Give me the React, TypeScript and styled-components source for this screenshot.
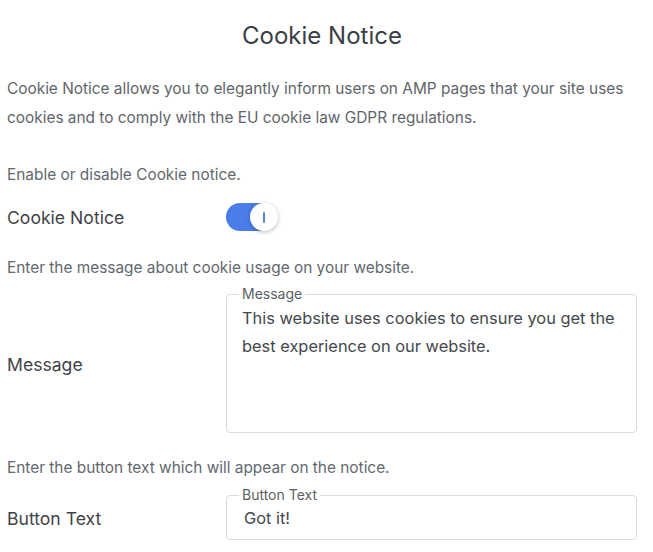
import React, { useState } from 'react';
import styled, { createGlobalStyle } from 'styled-components';

const GlobalStyle = createGlobalStyle`
  body {
    margin: 0;
    background: #fff;
    font-family: Inter, 'Noto Sans', sans-serif;
  }
`;

const Page = styled.div`
  width: 653px;
  padding: 0 16px 0 7px;
  box-sizing: border-box;
`;

const Title = styled.h1`
  margin: 0;
  padding-top: 20px;
  text-align: center;
  font-size: 24px;
  font-weight: 400;
  color: #3b4045;
  line-height: 32px;
`;

const Intro = styled.p`
  margin: 22px 0 0;
  font-size: 15.4px;
  line-height: 29px;
  color: #5f656b;
`;

const Hint = styled.p<{ $top?: number }>`
  margin: ${p => p.$top ?? 26}px 0 0;
  font-size: 15.4px;
  line-height: 20px;
  color: #62686e;
`;

const Row = styled.div<{ $top?: number }>`
  display: flex;
  align-items: center;
  margin-top: ${p => p.$top ?? 8}px;
`;

// fieldset rows carry the legend above the border, so the label drops a bit to sit on the box centre
const Label = styled.div<{ $drop?: number }>`
  width: 219px;
  flex-shrink: 0;
  padding-top: ${p => p.$drop ?? 0}px;
  font-size: 17.6px;
  color: #3f4347;
`;

const Track = styled.button<{ $on: boolean }>`
  position: relative;
  width: 52px;
  height: 28px;
  padding: 0;
  border: none;
  border-radius: 14px;
  background: ${p => (p.$on ? 'linear-gradient(90deg, #4b7de9 0 70%, transparent 70%)' : '#c9ccd0')};
  cursor: pointer;
`;

const Knob = styled.span<{ $on: boolean }>`
  position: absolute;
  top: 0;
  left: ${p => (p.$on ? 24 : 0)}px;
  width: 28px;
  height: 28px;
  border-radius: 50%;
  background: #fff;
  box-shadow: 0 1px 4px rgba(0, 0, 0, 0.28);
  display: flex;
  align-items: center;
  justify-content: center;
  &::after {
    content: '';
    width: 2px;
    height: 11px;
    background: #5a82d8;
    border-radius: 1px;
  }
`;

const Field = styled.fieldset`
  flex: 1;
  margin: 0;
  padding: 0 15px 0 15px;
  border: 1px solid #d9dcdf;
  border-radius: 4px;
  min-width: 0;
`;

const Legend = styled.legend`
  padding: 0 3px;
  margin-left: -3px;
  font-size: 14px;
  line-height: 16px;
  color: #5a5f64;
`;

const Area = styled.textarea`
  display: block;
  width: 100%;
  height: 128px;
  margin: 0;
  padding: 2px 0 0;
  border: none;
  outline: none;
  resize: none;
  font-family: Inter, 'Noto Sans', sans-serif;
  font-size: 16.4px;
  line-height: 28px;
  color: #44484c;
  background: transparent;
`;

const Input = styled.input`
  display: block;
  width: 100%;
  height: 30px;
  margin: 0;
  padding: 0 0 6px 2px;
  border: none;
  outline: none;
  font-family: Inter, 'Noto Sans', sans-serif;
  font-size: 16.4px;
  color: #44484c;
  background: transparent;
`;

export default function App() {
  const [on, setOn] = useState(true);
  const [message, setMessage] = useState(
    'This website uses cookies to ensure you get the best experience on our website.'
  );
  const [buttonText, setButtonText] = useState('Got it!');

  return (
    <Page>
      <GlobalStyle />
      <Title>Cookie Notice</Title>
      <Intro>
        Cookie Notice allows you to elegantly inform users on AMP pages that your site uses
        cookies and to comply with the EU cookie law GDPR regulations.
      </Intro>

      <Hint $top={33}>Enable or disable Cookie notice.</Hint>
      <Row $top={18}>
        <Label>Cookie Notice</Label>
        <Track $on={on} onClick={() => setOn(!on)} aria-pressed={on}>
          <Knob $on={on} />
        </Track>
      </Row>

      <Hint $top={27}>Enter the message about cookie usage on your website.</Hint>
      <Row $top={8}>
        <Label $drop={10}>Message</Label>
        <Field>
          <Legend>Message</Legend>
          <Area value={message} onChange={e => setMessage(e.target.value)} />
        </Field>
      </Row>

      <Hint $top={25}>Enter the button text which will appear on the notice.</Hint>
      <Row $top={9}>
        <Label $drop={9}>Button Text</Label>
        <Field>
          <Legend>Button Text</Legend>
          <Input value={buttonText} onChange={e => setButtonText(e.target.value)} />
        </Field>
      </Row>
    </Page>
  );
}
